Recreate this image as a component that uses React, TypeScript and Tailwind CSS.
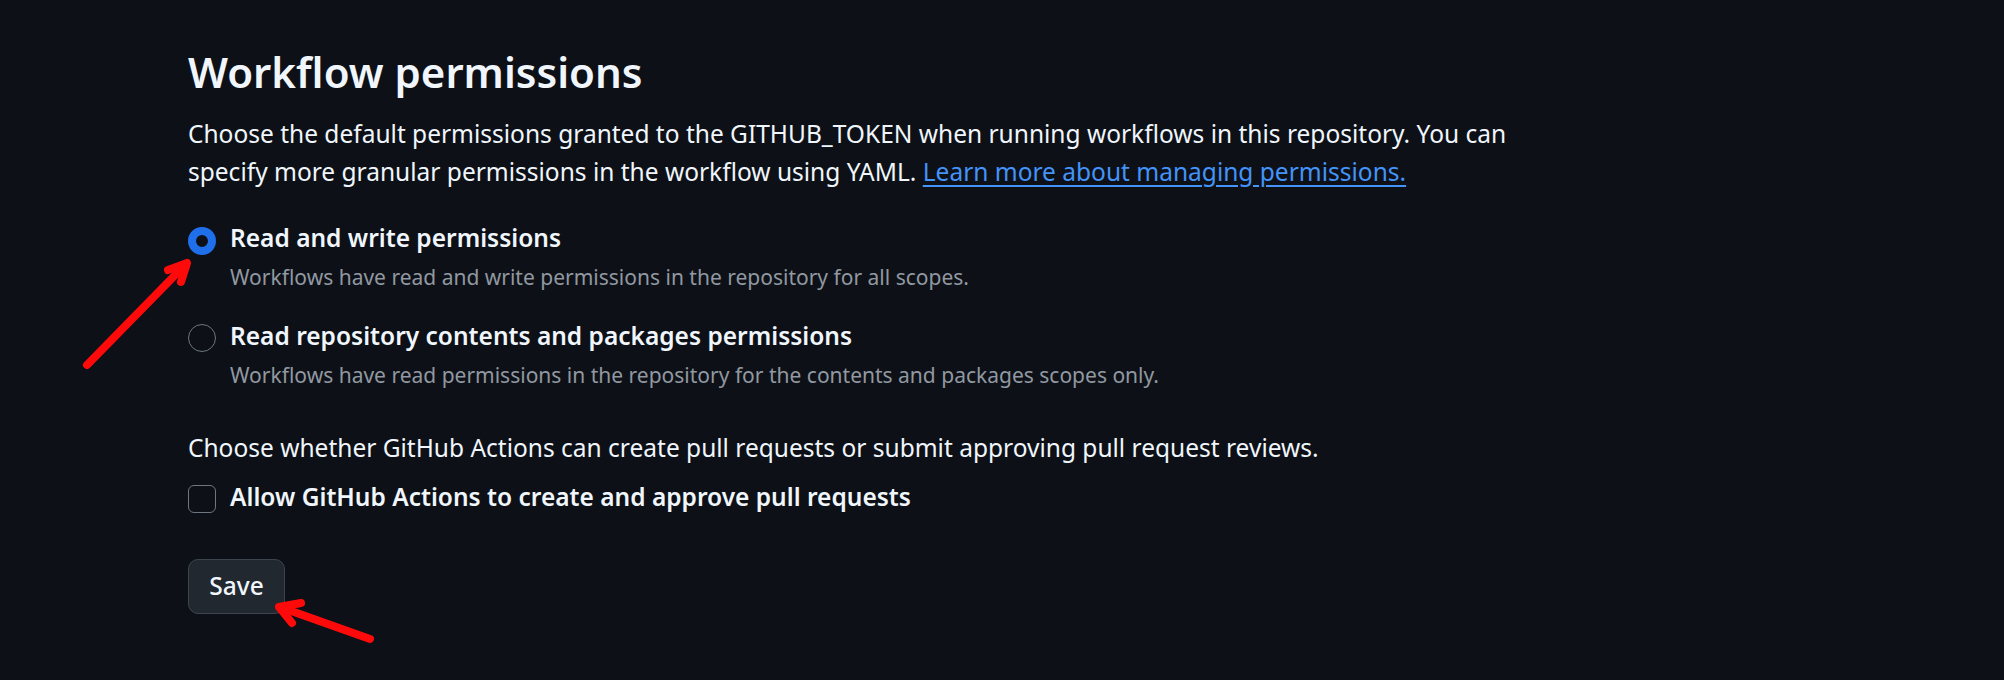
import React from "react";

const font = { fontFamily: '"Noto Sans", "Open Sans", sans-serif' };

function Radio({ checked }: { checked?: boolean }) {
  return checked ? (
    <span className="mt-[7.5px] box-border block h-[28px] w-[28px] shrink-0 rounded-full border-[8px] border-[#1f6feb] bg-[#0d1117]" />
  ) : (
    <span className="mt-[6.5px] box-border block h-[28px] w-[28px] shrink-0 rounded-full border-[1.5px] border-[#6e7681] bg-[#0d1117]" />
  );
}

function Option({
  checked,
  label,
  hint,
  className,
}: {
  checked?: boolean;
  label: string;
  hint: string;
  className?: string;
}) {
  return (
    <div className={"flex gap-[14px] " + (className ?? "")}>
      <Radio checked={checked} />
      <div>
        <div className="text-[24.5px] font-semibold leading-[36px] text-[#f0f6fc]">{label}</div>
        <div className="mt-[6.5px] text-[21px] leading-[30px] text-[#9198a1]">{hint}</div>
      </div>
    </div>
  );
}

function Arrows() {
  return (
    <svg
      className="pointer-events-none absolute left-0 top-0"
      width="2004"
      height="680"
      viewBox="0 0 2004 680"
      fill="none"
      stroke="#ff0a0a"
      strokeWidth="8"
      strokeLinecap="round"
      strokeLinejoin="round"
    >
      <path d="M87 365 L186 264" />
      <path d="M168 270 L187 263 L181 282" />
      <path d="M370 639 L280 607" />
      <path d="M301 603 L279 607 L292 623" />
    </svg>
  );
}

export default function App() {
  return (
    <div className="relative h-[680px] w-[2004px] overflow-hidden bg-[#0d1117]" style={font}>
      <div className="pl-[188px] pt-[46px]">
        <h2 className="text-[42px] font-semibold leading-[52px] text-[#f0f6fc]">Workflow permissions</h2>
        <p className="mt-[16.5px] max-w-[1340px] text-[24.5px] leading-[38px] text-[#f0f6fc]">
          Choose the default permissions granted to the GITHUB_TOKEN when running workflows in this repository. You can
          specify more granular permissions in the workflow using YAML.{" "}
          <a href="#" className="text-[#4493f8] underline underline-offset-[4px]">
            Learn more about managing permissions.
          </a>
        </p>

        <Option
          checked
          className="mt-[29px]"
          label="Read and write permissions"
          hint="Workflows have read and write permissions in the repository for all scopes."
        />
        <Option
          className="mt-[25.5px]"
          label="Read repository contents and packages permissions"
          hint="Workflows have read permissions in the repository for the contents and packages scopes only."
        />

        <p className="mt-[38.5px] text-[24.5px] leading-[38px] text-[#f0f6fc]">
          Choose whether GitHub Actions can create pull requests or submit approving pull request reviews.
        </p>
        <label className="mt-[12px] flex gap-[14px]">
          <span className="mt-[6.5px] box-border block h-[28px] w-[28px] shrink-0 rounded-[6px] border-[1.5px] border-[#6e7681] bg-[#0d1117]" />
          <span className="text-[24.5px] font-semibold leading-[36px] text-[#f0f6fc]">
            Allow GitHub Actions to create and approve pull requests
          </span>
        </label>

        <button className="mt-[44.5px] box-border flex h-[55px] w-[97px] items-center justify-center rounded-[10px] border-[1.5px] border-[#3d444d] bg-[#212830] text-[24.5px] font-medium text-[#f0f6fc]">
          Save
        </button>
      </div>
      <Arrows />
    </div>
  );
}
